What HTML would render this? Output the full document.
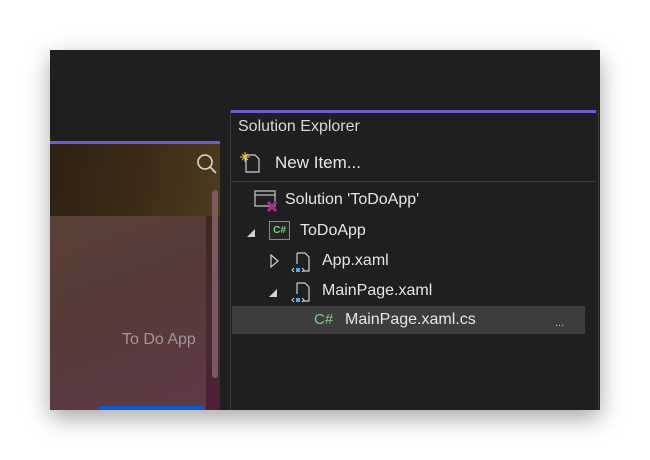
<!DOCTYPE html>
<html><head><style>
body{margin:0;width:650px;height:460px;background:#fff;overflow:hidden;font-family:"Segoe UI","Liberation Sans",sans-serif;position:relative}
.frame{position:absolute;left:50px;top:50px;width:550px;height:360px;background:#1f1f1f;box-shadow:0 8px 22px rgba(0,0,0,.35);overflow:hidden}
.abs{position:absolute}
.t{position:absolute;color:#e6e6e6;font-size:16px;white-space:nowrap}
</style></head><body>
<div class="frame">
  <div class="abs" style="left:0;top:91px;width:170px;height:3px;background:#6f5bd6"></div>
  <div class="abs" style="left:0;top:94px;width:170px;height:266px;background:linear-gradient(160deg,#3a2a1a 0%,#3d2618 30%,#4a2a30 70%,#4e1f3a 100%)"></div>
  <div class="abs" style="left:0;top:94px;width:170px;height:72px;background:linear-gradient(100deg,#2e2114 0%,#3a2a16 50%,#4d3c1e 100%)"></div>
  <div class="abs" style="left:0;top:166px;width:156px;height:194px;background:linear-gradient(160deg,#5a4138 0%,#553a36 45%,#5e3a48 100%)"></div>
  <div class="abs" style="left:162px;top:140px;width:6px;height:188px;border-radius:3px;background:#7a5a60"></div>
  <svg class="abs" style="left:146px;top:103px" width="24" height="24"><circle cx="9" cy="9" r="7" fill="none" stroke="#d8d8d8" stroke-width="1.6"/><path d="M14 14 L20 20" stroke="#d8d8d8" stroke-width="1.6"/></svg>
  <div class="t" style="left:72px;top:281px;color:#a49494;font-size:16px">To Do App</div>
  <div class="abs" style="left:47px;top:356px;width:108px;height:10px;border-radius:5px;background:#0a5ad0"></div>
  <div class="abs" style="left:180px;top:60px;width:367px;height:300px;border:1px solid #3a3a3a;border-bottom:none;background:#1f1f1f"></div>
  <div class="abs" style="left:181px;top:60px;width:365px;height:3px;background:#6f5bd6"></div>
  <div class="t" style="left:188px;top:68px;font-size:16px;color:#d8d8d8">Solution Explorer</div>
  <svg class="abs" style="left:190px;top:101px" width="24" height="24"><path d="M6 4 H15 L19 8 V21 H6 Z" fill="none" stroke="#cfcfcf" stroke-width="1.2"/><path d="M2 3 L8 9 M8 3 L2 9 M5 1 V11 M0 6 H10" stroke="#f0c040" stroke-width="1"/></svg>
  <div class="t" style="left:225px;top:103px;font-size:17px">New Item...</div>
  <div class="abs" style="left:181px;top:131px;width:365px;height:1px;background:#3c3c3c"></div>
  <svg class="abs" style="left:204px;top:139px" width="30" height="26"><rect x="1" y="2" width="20" height="15" fill="none" stroke="#bdbdbd" stroke-width="1.3"/><path d="M1 6 H21" stroke="#bdbdbd" stroke-width="1.3"/><path d="M14 13 L22 22 M22 13 L14 22" stroke="#b0288c" stroke-width="3"/></svg>
  <div class="t" style="left:235px;top:141px">Solution 'ToDoApp'</div>
  <svg class="abs" style="left:196px;top:177px" width="12" height="12"><path d="M9 2 V10 H1 Z" fill="#d0d0d0"/></svg>
  <div class="abs" style="left:219px;top:171px;width:19px;height:17px;border:1.5px solid #8a8a8a;background:#252525;color:#7fd07f;font-size:10px;line-height:17px;text-align:center;font-weight:bold">C#</div>
  <div class="t" style="left:250px;top:172px">ToDoApp</div>
  <svg class="abs" style="left:219px;top:204px" width="12" height="14"><path d="M2 1 L9 7 L2 13 Z" fill="none" stroke="#d0d0d0" stroke-width="1.2"/></svg>
  <svg class="abs" style="left:240px;top:200px" width="24" height="24"><path d="M7 3 H15 L19 7 V21 H13" fill="none" stroke="#cfcfcf" stroke-width="1.2"/><path d="M7 3 V14" stroke="#cfcfcf" stroke-width="1.2"/><path d="M4 18 L2 20 L4 22 M12 18 L14 20 L12 22" fill="none" stroke="#cfcfcf"/><rect x="6" y="18" width="4" height="4" fill="#4aa8f0"/></svg>
  <div class="t" style="left:272px;top:202px">App.xaml</div>
  <svg class="abs" style="left:218px;top:237px" width="12" height="12"><path d="M9 2 V10 H1 Z" fill="#d0d0d0"/></svg>
  <svg class="abs" style="left:240px;top:230px" width="24" height="24"><path d="M7 3 H15 L19 7 V21 H13" fill="none" stroke="#cfcfcf" stroke-width="1.2"/><path d="M7 3 V14" stroke="#cfcfcf" stroke-width="1.2"/><path d="M4 18 L2 20 L4 22 M12 18 L14 20 L12 22" fill="none" stroke="#cfcfcf"/><rect x="6" y="18" width="4" height="4" fill="#4aa8f0"/></svg>
  <div class="t" style="left:272px;top:232px">MainPage.xaml</div>
  <div class="abs" style="left:182px;top:256px;width:353px;height:28px;background:#3d3d3d"></div>
  <div class="t" style="left:264px;top:261px;color:#7fd07f;font-size:15px">C#</div>
  <div class="t" style="left:295px;top:261px">MainPage.xaml.cs</div>
  <div class="t" style="left:505px;top:267px;font-size:11px;color:#ccc">...</div>
</div>
</body></html>
